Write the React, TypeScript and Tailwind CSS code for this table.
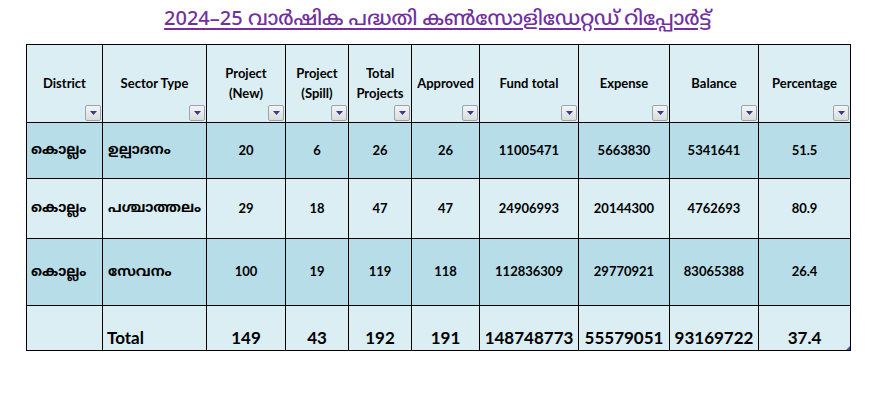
const COLS = [76, 104, 79, 63, 63, 68, 99, 91, 89, 92];

const HEADERS: string[][] = [
  ["District"],
  ["Sector Type"],
  ["Project", "(New)"],
  ["Project", "(Spill)"],
  ["Total", "Projects"],
  ["Approved"],
  ["Fund total"],
  ["Expense"],
  ["Balance"],
  ["Percentage"],
];

const ROWS = [
  { district: "കൊല്ലം", sector: "ഉല്പാദനം", vals: ["20", "6", "26", "26", "11005471", "5663830", "5341641", "51.5"], h: "h-[56px]", bg: "bg-[#b7dee8]" },
  { district: "കൊല്ലം", sector: "പശ്ചാത്തലം", vals: ["29", "18", "47", "47", "24906993", "20144300", "4762693", "80.9"], h: "h-[60px]", bg: "bg-[#daeef3]" },
  { district: "കൊല്ലം", sector: "സേവനം", vals: ["100", "19", "119", "118", "112836309", "29770921", "83065388", "26.4"], h: "h-[67px]", bg: "bg-[#b7dee8]" },
];

const TOTALS = ["149", "43", "192", "191", "148748773", "55579051", "93169722", "37.4"];

const ML = "font-['Noto_Sans_Malayalam','Kartika','Lato','Noto_Sans',sans-serif]";

function FilterButton() {
  return (
    <span className="absolute bottom-[1px] right-[1px] flex h-[16px] w-[16px] items-center justify-center rounded-[2px] border border-[#9aa3b0] bg-gradient-to-b from-[#f4f4f4] to-[#dcdcdc]">
      <svg width="7" height="4" viewBox="0 0 7 4">
        <polygon points="0,0 7,0 3.5,4" fill="#2f3f8f" />
      </svg>
    </span>
  );
}

export default function App() {
  return (
    <div className="h-[403px] w-[871px] bg-white font-['Lato','Liberation_Sans',sans-serif] text-black">
      <div className="flex justify-center pl-[4px] pt-[5px]">
        <h1 className="font-['Noto_Sans','Noto_Sans_Malayalam',sans-serif] text-[20px] font-medium leading-[26px] text-[#7030a0] underline decoration-[1.5px] underline-offset-[3px]">
          2024–25 വാർഷിക പദ്ധതി കൺസോളിഡേറ്റഡ് റിപ്പോർട്ട്
        </h1>
      </div>

      <table className="ml-[26px] mt-[13px] table-fixed border-collapse border border-black">
        <colgroup>
          {COLS.map((w, i) => (
            <col key={i} style={{ width: w }} />
          ))}
        </colgroup>
        <thead>
          <tr className="h-[78px] bg-[#daeef3]">
            {HEADERS.map((lines, i) => (
              <th key={i} className="relative border border-black p-0 text-center align-middle text-[13px] font-bold leading-[20px]">
                <div className="-mx-[2px] whitespace-nowrap pb-[2px]">
                  {lines.map((l) => (
                    <div key={l}>{l}</div>
                  ))}
                </div>
                <FilterButton />
              </th>
            ))}
          </tr>
        </thead>
        <tbody>
          {ROWS.map((r, ri) => (
            <tr key={ri} className={`${r.h} ${r.bg}`}>
              <td className={`border border-black pl-[4px] text-left align-middle text-[14px] font-bold ${ML}`}>{r.district}</td>
              <td className={`border border-black pl-[5px] text-left align-middle text-[14px] font-bold ${ML}`}>{r.sector}</td>
              {r.vals.map((v, vi) => (
                <td key={vi} className="border border-black p-0 text-center align-middle text-[13px] font-bold">
                  {v}
                </td>
              ))}
            </tr>
          ))}
          <tr className="h-[45px] bg-[#daeef3]">
            <td className="border border-black" />
            <td className="border border-black pb-[1px] pl-[4px] text-left align-bottom text-[17px] font-bold leading-[22px]">Total</td>
            {TOTALS.map((v, i) => (
              <td key={i} className="relative border border-black p-0 pb-[1px] text-center align-bottom text-[17px] font-bold leading-[22px]">
                {v}
                {i === TOTALS.length - 1 && (
                  <span className="absolute bottom-0 right-0 h-0 w-0 border-b-[4px] border-l-[4px] border-b-[#3b4ea8] border-l-transparent" />
                )}
              </td>
            ))}
          </tr>
        </tbody>
      </table>
    </div>
  );
}
